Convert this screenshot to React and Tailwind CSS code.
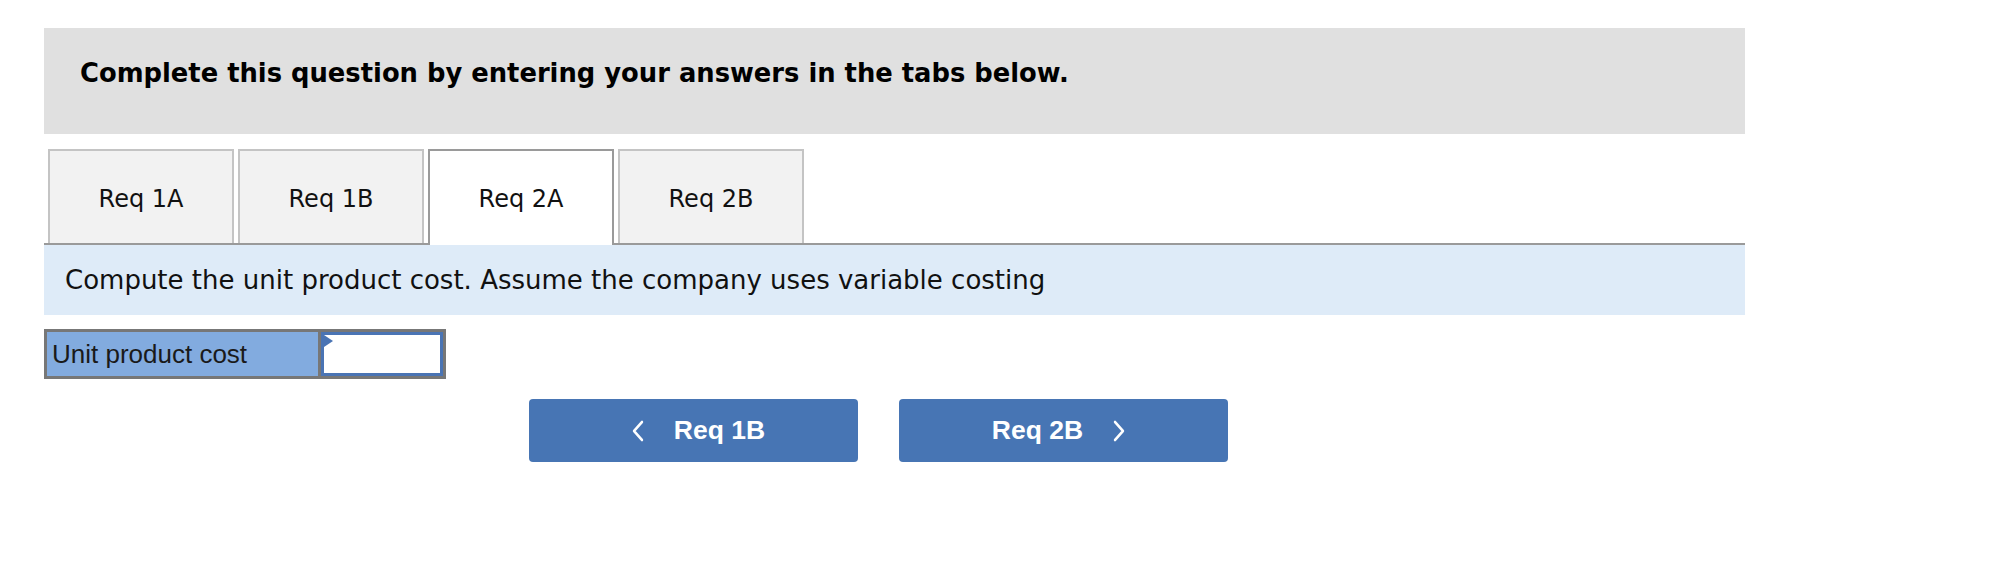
import { ChevronLeft, ChevronRight } from "lucide-react";

const tabs = ["Req 1A", "Req 1B", "Req 2A", "Req 2B"];
const active = "Req 2A";

function Tab({ label }) {
  const isActive = label === active;
  return (
    <div
      className={
        isActive
          ? "relative -mb-[2px] flex h-[96px] w-[186px] items-start justify-center border-2 border-b-0 border-[#9a9a9a] bg-white pt-[33px]"
          : "flex h-[94px] w-[186px] items-start justify-center border-2 border-b-0 border-[#c4c4c4] bg-[#f2f2f2] pt-[33px]"
      }
    >
      <span className="text-[24px] leading-[30px] text-[#111]">{label}</span>
    </div>
  );
}

export default function App() {
  return (
    <div className="min-h-screen bg-white pl-[44px] pt-[28px] font-['DejaVu_Sans',Verdana,sans-serif]">
      <div className="w-[1701px]">
        <div className="flex h-[106px] items-start bg-[#e0e0e0] pl-[36px] pt-[28px]">
          <h1 className="text-[25.8px] font-bold leading-[34px] text-black">
            Complete this question by entering your answers in the tabs below.
          </h1>
        </div>

        <div className="mt-[15px] flex gap-[4px] border-b-2 border-[#9a9a9a] pl-[4px]">
          {tabs.map((t) => (
            <Tab key={t} label={t} />
          ))}
        </div>

        <div className="flex h-[70px] items-center bg-[#deebf8] pl-[21px]">
          <p className="text-[26px] leading-[34px] text-[#111]">
            Compute the unit product cost. Assume the company uses variable costing
          </p>
        </div>

        <div className="mt-[14px] flex h-[50px] w-[402px] border-[3px] border-[#777]">
          <div className="flex w-[274px] items-center border-r-[3px] border-[#777] bg-[#82abdf] pl-[5px] font-['Liberation_Sans',Arial,sans-serif] text-[26px] leading-[30px] text-[#1a1a1a]">
            Unit product cost
          </div>
          <div className="relative flex-1 border-[3px] border-[#4a74b4] bg-white">
            <span className="absolute left-0 top-0 h-0 w-0 border-y-[6px] border-l-[9px] border-y-transparent border-l-[#4a74b4]" />
            <input className="h-full w-full bg-transparent outline-none" />
          </div>
        </div>

        <div className="mt-[20px] flex gap-[41px] pl-[485px] font-['Liberation_Sans',Arial,sans-serif]">
          <button className="flex h-[63px] w-[329px] items-center justify-center gap-[20px] rounded-[4px] bg-[#4775b4] text-[26.5px] font-bold text-white">
            <ChevronLeft className="h-[36px] w-[32px]" strokeWidth={1.8} preserveAspectRatio="none" />
            <span>Req 1B</span>
          </button>
          <button className="flex h-[63px] w-[329px] items-center justify-center gap-[20px] rounded-[4px] bg-[#4775b4] text-[26.5px] font-bold text-white">
            <span>Req 2B</span>
            <ChevronRight className="h-[36px] w-[32px]" strokeWidth={1.8} preserveAspectRatio="none" />
          </button>
        </div>
      </div>
    </div>
  );
}
